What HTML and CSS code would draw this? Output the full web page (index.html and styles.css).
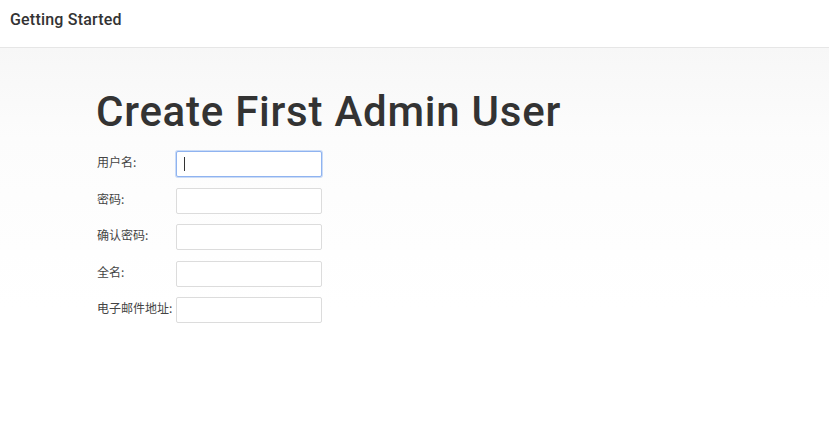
FILE: index.html
```html
<!DOCTYPE html>
<html lang="zh">
<head>
<meta charset="utf-8">
<title>Getting Started</title>
<link rel="stylesheet" href="styles.css">
</head>
<body>
<header class="topbar">
  <div class="topbar-title">Getting Started</div>
</header>
<main class="content">
  <h1 class="page-title">Create First Admin User</h1>
  <form class="admin-form">
    <label class="field-label" for="u">用户名:</label>
    <div class="field-box"><input id="u" class="field-input focused" type="text"><span class="caret"></span></div>
    <label class="field-label" for="p">密码:</label>
    <div class="field-box"><input id="p" class="field-input" type="password"></div>
    <label class="field-label" for="p2">确认密码:</label>
    <div class="field-box"><input id="p2" class="field-input" type="password"></div>
    <label class="field-label" for="n">全名:</label>
    <div class="field-box"><input id="n" class="field-input" type="text"></div>
    <label class="field-label" for="e">电子邮件地址:</label>
    <div class="field-box"><input id="e" class="field-input" type="text"></div>
  </form>
</main>
</body>
</html>
```

FILE: styles.css
```css
html, body {
  margin: 0;
  padding: 0;
  height: 100%;
  background: #fff;
}
body {
  font-family: Roboto, "Noto Sans CJK SC", sans-serif;
  color: #333;
}
.topbar {
  height: 47px;
  border-bottom: 1px solid #e6e6e6;
  background: #fff;
  display: flex;
  align-items: center;
  padding-left: 10px;
  box-sizing: content-box;
}
.topbar-title {
  font-size: 16px;
  font-weight: 500;
  letter-spacing: 0.2px;
  color: #333;
  margin-top: -9px;
}
.content {
  background: linear-gradient(to bottom, #f7f7f7 0px, #fcfcfc 90px, #ffffff 260px);
  padding: 40px 0 0 96px;
  height: calc(100% - 48px);
  box-sizing: border-box;
}
.page-title {
  margin: 0;
  font-family: Roboto, sans-serif;
  font-weight: 500;
  font-size: 42px;
  line-height: 48px;
  color: #333;
  letter-spacing: 0.75px;
}
.admin-form {
  display: grid;
  grid-template-columns: 80px 146px;
  row-gap: 10.6px;
  margin-top: 15px;
  align-items: center;
}
.field-label {
  font-family: "Noto Sans CJK SC", sans-serif;
  font-size: 12px;
  color: #444;
  padding-left: 1px;
  margin-top: -5px;
  white-space: nowrap;
}
.field-box {
  position: relative;
  height: 26px;
}
.field-input {
  box-sizing: border-box;
  width: 146px;
  height: 26px;
  margin: 0;
  border: 1px solid #dcdcdc;
  border-radius: 2px;
  background: #fff;
  outline: none;
  padding: 0 6px;
  font-size: 13px;
}
.field-input.focused {
  border-color: #8fb3f0;
  box-shadow: 0 0 0 1px rgba(143, 179, 240, 0.45);
}
.caret {
  position: absolute;
  left: 8px;
  top: 6px;
  width: 1px;
  height: 14px;
  background: #333;
}
```
